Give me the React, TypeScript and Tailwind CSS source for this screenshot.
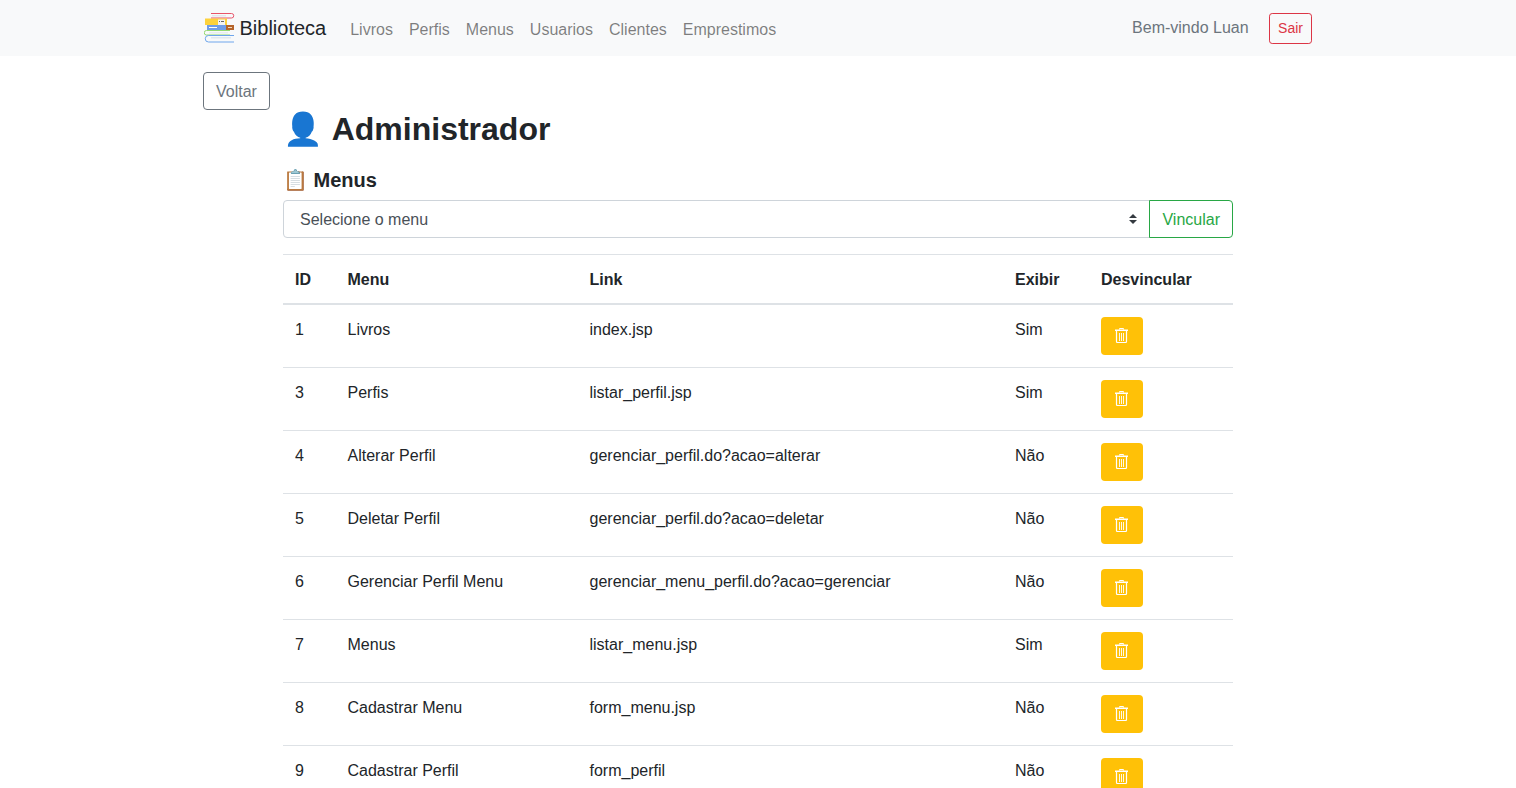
import React from "react";

const rows = [
  ["1", "Livros", "index.jsp", "Sim"],
  ["3", "Perfis", "listar_perfil.jsp", "Sim"],
  ["4", "Alterar Perfil", "gerenciar_perfil.do?acao=alterar", "Não"],
  ["5", "Deletar Perfil", "gerenciar_perfil.do?acao=deletar", "Não"],
  ["6", "Gerenciar Perfil Menu", "gerenciar_menu_perfil.do?acao=gerenciar", "Não"],
  ["7", "Menus", "listar_menu.jsp", "Sim"],
  ["8", "Cadastrar Menu", "form_menu.jsp", "Não"],
  ["9", "Cadastrar Perfil", "form_perfil", "Não"],
];

function Logo() {
  return (
    <svg width="31" height="32" viewBox="204 12 31 32" className="shrink-0">
      <path d="M231.5 13.5H211M211 18H231.5A2 2 0 0 0 231.5 13.5" fill="none" stroke="#e8556a" strokeWidth="1" />
      <rect x="212" y="15" width="14" height="1.5" fill="#e4e9ee" />
      <rect x="205" y="18.5" width="22" height="6.5" fill="#fdd23c" />
      <rect x="218" y="19.5" width="7" height="5.5" fill="#f3f3f3" />
      <rect x="219" y="21" width="1" height="1" fill="#666" />
      <rect x="221" y="21" width="3" height="1" fill="#666" />
      <rect x="207" y="25" width="19" height="5" fill="#6f9de8" />
      <rect x="209" y="27" width="8" height="1" fill="#fff" />
      <rect x="226" y="25" width="8" height="5" fill="#b5642a" />
      <rect x="228" y="27" width="4" height="1" fill="#f1d9c2" />
      <path d="M230 30.5H206.5a2 2 0 0 0 0 4.5H230" fill="none" stroke="#93d873" strokeWidth="1" />
      <rect x="209" y="32" width="19" height="1.5" fill="#e8eef0" />
      <path d="M234 35.5H208.5a3 3 0 0 0 0 6.5H234" fill="none" stroke="#6ea6ec" strokeWidth="1" />
      <rect x="211" y="37" width="20" height="1.5" fill="#dfe8f0" />
    </svg>
  );
}

function Trash() {
  return (
    <svg width="13" height="15" viewBox="0 0 13 15" className="mr-px mb-[2px]">
      <path d="M4.5 1.5V.5h4v1" fill="none" stroke="#fff" strokeWidth="1" />
      <rect x="0" y="1.5" width="13" height="1.5" fill="#fff" />
      <path d="M1.5 3v10.5a1 1 0 0 0 1 1h8a1 1 0 0 0 1-1V3" fill="none" stroke="#fff" strokeWidth="1.2" />
      <path d="M4.5 5v8M6.5 5v8M8.5 5v8" fill="none" stroke="#fff" strokeWidth="1" strokeOpacity="0.9" />
    </svg>
  );
}

export default function App() {
  return (
    <div className="h-screen overflow-hidden bg-white text-[16px] leading-6 text-[#212529] font-['Liberation_Sans',Arial,sans-serif]">
      <nav className="h-14 bg-[#f8f9fa]">
        <div className="mx-auto flex h-full w-[1140px] items-center justify-between px-4">
          <div className="flex items-center">
            <a className="mr-4 flex items-center gap-[4.5px] text-[20px] leading-[30px] text-[#212529]">
              <Logo />
              <span>Biblioteca</span>
            </a>
            <ul className="flex text-[#00000080]">
              {["Livros", "Perfis", "Menus", "Usuarios", "Clientes", "Emprestimos"].map((l) => (
                <li key={l} className="px-2 pt-[10px] pb-[6px]">{l}</li>
              ))}
            </ul>
          </div>
          <div className="flex items-center">
            <span className="mr-[20.5px] text-[#6c757d]">Bem-vindo Luan</span>
            <button className="h-[31px] rounded-[3.2px] border border-[#dc3545] px-2 text-[14px] leading-[21px] text-[#dc3545]">Sair</button>
          </div>
        </div>
      </nav>
      <main className="mx-auto w-[1140px] px-[15px] pt-4">
        <button className="h-[38px] rounded border border-[#6c757d] px-3 pt-[2px] text-[#6c757d]">Voltar</button>
        <div className="mx-[80px]">
          <h2 className="mb-[20px] text-[32px] font-bold leading-[38.4px]"><span className="mr-px">👤</span> Administrador</h2>
          <h5 className="mb-2 text-[20px] font-bold leading-6">📋 Menus</h5>
          <div className="mb-4 flex h-[38px]">
            <div className="relative -mr-px flex-1">
              <select className="h-full w-full appearance-none rounded-l border border-[#ced4da] bg-white pl-4 pt-[2px] text-[#495057]">
                <option>Selecione o menu</option>
              </select>
              <svg width="8" height="10" viewBox="0 0 8 10" className="pointer-events-none absolute right-[13px] top-[14px]">
                <path d="M0 4 4 0 8 4ZM0 6 4 10 8 6Z" fill="#343a40" />
              </svg>
            </div>
            <button className="relative rounded-r border border-[#28a745] px-3 pt-[2px] text-[#28a745]">Vincular</button>
          </div>
          <table className="w-full table-fixed border-collapse">
            <colgroup>
              <col className="w-[52.5px]" />
              <col className="w-[242px]" />
              <col className="w-[425.5px]" />
              <col className="w-[86px]" />
              <col className="w-[144px]" />
            </colgroup>
            <thead>
              <tr className="border-t border-b-2 border-t-[#dee2e6] border-b-[#dee2e6] text-left">
                {["ID", "Menu", "Link", "Exibir", "Desvincular"].map((h) => (
                  <th key={h} className="px-3 pt-[13px] pb-[11px] align-bottom font-bold">{h}</th>
                ))}
              </tr>
            </thead>
            <tbody>
              {rows.map((r) => (
                <tr key={r[0]} className="border-b border-[#dee2e6]">
                  {r.map((c, i) => (
                    <td key={i} className="px-3 pt-[13px] pb-[11px] align-top">{c}</td>
                  ))}
                  <td className="p-3 align-top">
                    <button className="flex h-[38px] w-[42px] items-center justify-center rounded bg-[#ffc107] text-white">
                      <Trash />
                    </button>
                  </td>
                </tr>
              ))}
            </tbody>
          </table>
        </div>
      </main>
    </div>
  );
}
